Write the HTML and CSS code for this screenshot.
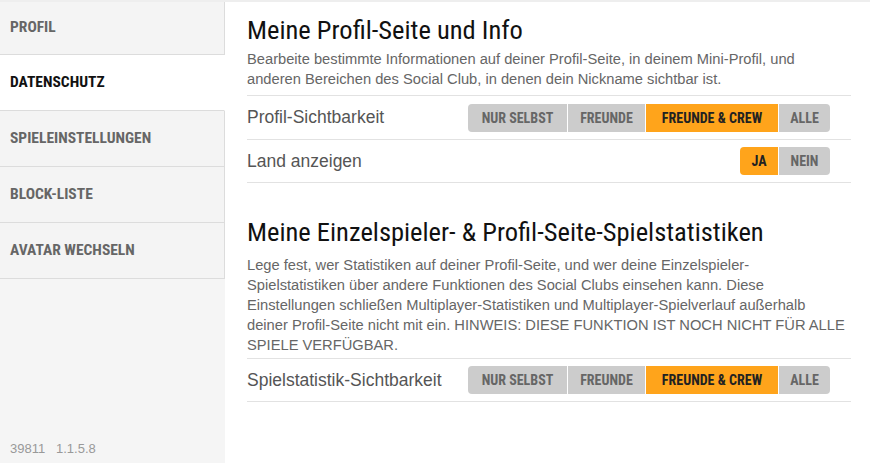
FILE: index.html
```html
<!DOCTYPE html>
<html lang="de">
<head>
<meta charset="utf-8">
<title>Datenschutz</title>
<link rel="stylesheet" href="styles.css">
</head>
<body>
<div class="page">
  <aside class="sidebar">
    <nav class="nav">
      <a class="nav-item">PROFIL</a>
      <a class="nav-item active">DATENSCHUTZ</a>
      <a class="nav-item">SPIELEINSTELLUNGEN</a>
      <a class="nav-item">BLOCK-LISTE</a>
      <a class="nav-item">AVATAR WECHSELN</a>
    </nav>
    <div class="version">39811&nbsp;&nbsp;&nbsp;1.1.5.8</div>
  </aside>
  <main class="main">
    <section class="section">
      <h1 class="title">Meine Profil-Seite und Info</h1>
      <p class="desc">Bearbeite bestimmte Informationen auf deiner Profil-Seite, in deinem Mini-Profil, und<br>anderen Bereichen des Social Club, in denen dein Nickname sichtbar ist.</p>
      <div class="row">
        <span class="label">Profil-Sichtbarkeit</span>
        <div class="seg">
          <span class="btn w-nur">NUR SELBST</span>
          <span class="btn w-fr">FREUNDE</span>
          <span class="btn w-crew on">FREUNDE &amp; CREW</span>
          <span class="btn w-alle">ALLE</span>
        </div>
      </div>
      <div class="row">
        <span class="label">Land anzeigen</span>
        <div class="seg">
          <span class="btn w-ja on">JA</span>
          <span class="btn w-nein">NEIN</span>
        </div>
      </div>
    </section>
    <section class="section second">
      <h1 class="title">Meine Einzelspieler- &amp; Profil-Seite-Spielstatistiken</h1>
      <p class="desc">Lege fest, wer Statistiken auf deiner Profil-Seite, und wer deine Einzelspieler-<br>Spielstatistiken über andere Funktionen des Social Clubs einsehen kann. Diese<br>Einstellungen schließen Multiplayer-Statistiken und Multiplayer-Spielverlauf außerhalb<br>deiner Profil-Seite nicht mit ein. HINWEIS: DIESE FUNKTION IST NOCH NICHT FÜR ALLE<br>SPIELE VERFÜGBAR.</p>
      <div class="row">
        <span class="label">Spielstatistik-Sichtbarkeit</span>
        <div class="seg">
          <span class="btn w-nur">NUR SELBST</span>
          <span class="btn w-fr">FREUNDE</span>
          <span class="btn w-crew on">FREUNDE &amp; CREW</span>
          <span class="btn w-alle">ALLE</span>
        </div>
      </div>
    </section>
  </main>
</div>
</body>
</html>
```

FILE: styles.css
```css
* { box-sizing: border-box; }
html, body { margin: 0; padding: 0; }
body {
  width: 870px;
  height: 463px;
  overflow: hidden;
  background: #fff;
  font-family: "Liberation Sans", Arial, sans-serif;
  border-top: 2px solid #eeeeee;
}
.page {
  display: flex;
  height: 461px;
}
.sidebar {
  width: 225px;
  flex: 0 0 225px;
  background: #f5f5f5;
  display: flex;
  flex-direction: column;
  justify-content: space-between;
}
.nav { display: flex; flex-direction: column; }
.nav-item {
  height: 56px;
  border-bottom: 1px solid #dcdcdc;
  border-right: 1px solid #dcdcdc;
  background: #f4f4f4;
  padding: 0 10px 2px;
  display: flex;
  align-items: center;
  font-family: "Liberation Sans Narrow", "Roboto Condensed", "Liberation Sans", sans-serif;
  font-weight: bold;
  font-size: 15.5px;
  color: #666;
}
.nav-item:first-child { height: 53px; }
.nav-item.active {
  background: #fff;
  color: #111;
  border-right-color: #fff;
}
.version {
  padding: 0 10px 7px;
  font-size: 13px;
  color: #999;
}
.main {
  flex: 1;
  padding: 0 19px 0 22px;
}
.title {
  margin: 12px 0 0;
  font-family: "Liberation Sans Narrow", "Roboto Condensed", "Liberation Sans", sans-serif;
  font-weight: normal;
  font-size: 26.5px;
  line-height: 32px;
  color: #111;
}
.second .title { margin-top: 33px; }
.desc {
  margin: 3px 0 0;
  font-size: 14.7px;
  line-height: 20px;
  color: #666;
  padding-bottom: 6px;
  border-bottom: 1px solid #e2e2e2;
  white-space: nowrap;
}
.second .desc { margin-top: 7px; padding-bottom: 3px; }
.row {
  display: flex;
  align-items: center;
  justify-content: space-between;
  height: 44px;
  border-bottom: 1px solid #e2e2e2;
  padding-right: 21px;
}
.row + .row { height: 43px; }
.second .row { height: 43px; }
.label {
  font-size: 17.5px;
  color: #555;
}
.seg {
  display: flex;
  gap: 1px;
  height: 28px;
}
.btn {
  display: flex;
  align-items: center;
  justify-content: center;
  background: #cccccc;
  color: #666;
  font-family: "Liberation Sans Narrow", "Roboto Condensed", "Liberation Sans", sans-serif;
  font-weight: bold;
  font-size: 14px;
}
.btn:first-child { border-radius: 4px 0 0 4px; }
.btn:last-child { border-radius: 0 4px 4px 0; }
.btn.on { background: #ffa41b; color: #222; }
.w-nur { width: 99px; }
.w-fr { width: 77px; }
.w-crew { width: 132px; }
.w-alle { width: 51px; }
.w-ja { width: 38px; }
.w-nein { width: 51px; }
```
